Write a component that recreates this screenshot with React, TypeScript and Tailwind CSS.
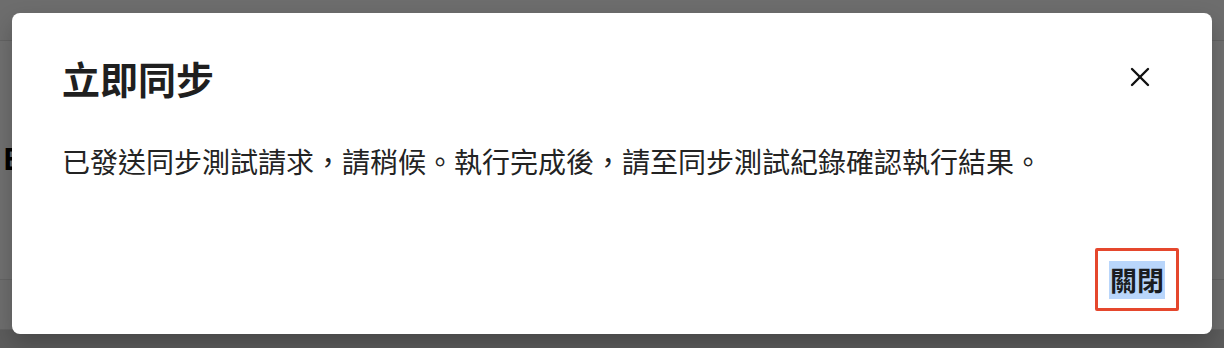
import { useState } from 'react'

const CloseIcon = () => (
  <svg width="20" height="20" viewBox="0 0 20 20" fill="none" stroke="#111" strokeWidth="2.4" strokeLinecap="round">
    <path d="M2 2 L18 18" />
    <path d="M18 2 L2 18" />
  </svg>
)

export default function App() {
  const [open] = useState(true)
  return (
    <div className="relative w-[1224px] h-[348px] overflow-hidden bg-[#707070] font-['Noto_Sans_CJK_TC','Noto_Sans',sans-serif]">
      {/* page behind the overlay */}
      <div className="flex flex-col h-full">
        <div className="h-[41px] border-b border-[#636363] bg-[#6d6d6d]"></div>
        <div className="h-[239px] border-b border-[#646464] bg-[#707070]"></div>
        <div className="h-[50px] border-b border-[#636363] bg-[#6e6e6e]"></div>
        <div className="flex-1 bg-[#5c5c5c]"></div>
      </div>
      <span className="absolute left-[3px] top-[143px] text-[29px] font-bold text-black leading-none">E</span>

      {open && (
        <div className="absolute left-[12px] top-[13px] w-[1200px] h-[321px] rounded-[8px] bg-white flex flex-col shadow-[0_10px_22px_rgba(0,0,0,0.22)]">
          <div className="mt-[46px] pl-[50px] pr-[62px] flex items-center justify-between">
            <h2 className="text-[38px] leading-none font-semibold text-[#1f1f1f]">立即同步</h2>
            <button className="-mt-[3px] flex items-center justify-center">
              <CloseIcon />
            </button>
          </div>
          <p className="mt-[50px] pl-[50px] text-[28px] leading-none text-[#232323]">
            已發送同步測試請求，請稍候。執行完成後，請至同步測試紀錄確認執行結果。
          </p>
          <div className="mt-auto flex justify-end pr-[33px] pb-[23px]">
            <button className="w-[84px] h-[63px] border-[3px] border-[#e5472d] rounded-[2px] flex items-center justify-center">
              <span className="bg-[#b9d6fb] text-[27px] leading-[38px] font-bold text-[#1a1d21] px-[1px]">關閉</span>
            </button>
          </div>
        </div>
      )}
    </div>
  )
}
